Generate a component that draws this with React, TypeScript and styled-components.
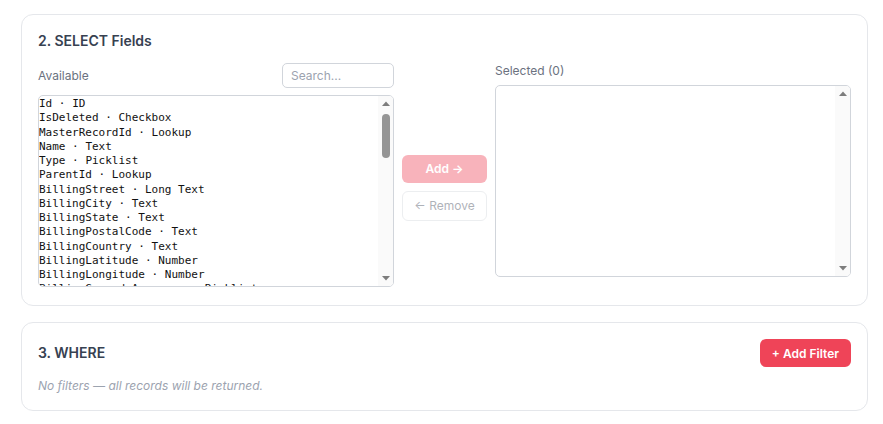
import styled, { createGlobalStyle } from "styled-components";

const GlobalStyle = createGlobalStyle`
  body {
    margin: 0;
    background: #ffffff;
    font-family: Inter, "Noto Sans", sans-serif;
  }
`;

const Page = styled.div`
  display: flex;
  flex-direction: column;
  gap: 16px;
  padding: 14px 15px 0 21px;
`;

const Card = styled.section<{ $bottom?: number }>`
  border: 1px solid #e5e7eb;
  border-radius: 12px;
  padding: 16px 16px ${(p) => p.$bottom ?? 16}px;
  background: #fff;
`;

const Title = styled.h2`
  margin: 0;
  font-size: 14px;
  line-height: 20px;
  font-weight: 600;
  color: #374151;
`;

const FieldsGrid = styled.div`
  display: grid;
  grid-template-columns: 1fr 85px 1fr;
  gap: 8px;
  margin-top: 12px;
`;

const Column = styled.div`
  display: flex;
  flex-direction: column;
  gap: 7px;
`;

const ColumnHead = styled.div<{ $tall?: boolean }>`
  display: flex;
  align-items: center;
  justify-content: space-between;
  height: ${(p) => (p.$tall ? "25px" : "15px")};
`;

const Label = styled.span`
  font-size: 12px;
  color: #6b7280;
`;

const SearchInput = styled.input`
  box-sizing: border-box;
  width: 112px;
  height: 25px;
  padding: 0 8px;
  border: 1px solid #d1d5db;
  border-radius: 5px;
  font-family: Inter, sans-serif;
  font-size: 12px;
  color: #374151;
  outline: none;
  &::placeholder {
    color: #9ca3af;
  }
`;

const ListFrame = styled.div`
  box-sizing: border-box;
  display: flex;
  height: 192px;
  border: 1px solid #d1d5db;
  border-radius: 5px;
  overflow: hidden;
  background: #fff;
`;

const Options = styled.div`
  flex: 1;
  overflow: hidden;
  padding-top: 1px;
  font-family: "DejaVu Sans Mono", monospace;
  font-size: 11px;
  color: #111;
`;

const OptionRow = styled.div`
  line-height: 14.25px;
  white-space: nowrap;
`;

const ScrollRail = styled.div`
  display: flex;
  flex-direction: column;
  width: 15px;
  background: #fafafa;
`;

const RailArrow = styled.div`
  display: flex;
  align-items: center;
  justify-content: center;
  height: 15px;
  flex: none;
`;

const RailTrack = styled.div`
  flex: 1;
  padding: 3px 3.5px 0;
`;

const Thumb = styled.div`
  height: 44px;
  border-radius: 4px;
  background: #959595;
`;

const Actions = styled.div`
  display: flex;
  flex-direction: column;
  justify-content: center;
  gap: 8px;
  padding-top: 25px;
`;

const ActionButton = styled.button<{ $primary?: boolean }>`
  box-sizing: border-box;
  height: ${(p) => (p.$primary ? "28px" : "30px")};
  border-radius: 6px;
  font-family: Inter, sans-serif;
  font-size: 12px;
  font-weight: ${(p) => (p.$primary ? 600 : 400)};
  color: ${(p) => (p.$primary ? "#fff" : "#374151")};
  background: ${(p) => (p.$primary ? "#ef4458" : "#fff")};
  border: ${(p) => (p.$primary ? "none" : "1px solid #d1d5db")};
  opacity: 0.4;
  cursor: not-allowed;
`;

const HeaderRow = styled.div`
  display: flex;
  align-items: center;
  justify-content: space-between;
`;

const AddFilterButton = styled.button`
  height: 28px;
  padding: 0 12px;
  border: none;
  border-radius: 6px;
  background: #ef4458;
  color: #fff;
  font-family: Inter, sans-serif;
  font-size: 12px;
  font-weight: 600;
  cursor: pointer;
`;

const EmptyNote = styled.p`
  margin: 11px 0 0;
  font-size: 12px;
  line-height: 16px;
  font-style: italic;
  color: #9ca3af;
`;

const fields: [string, string][] = [
  ["Id", "ID"],
  ["IsDeleted", "Checkbox"],
  ["MasterRecordId", "Lookup"],
  ["Name", "Text"],
  ["Type", "Picklist"],
  ["ParentId", "Lookup"],
  ["BillingStreet", "Long Text"],
  ["BillingCity", "Text"],
  ["BillingState", "Text"],
  ["BillingPostalCode", "Text"],
  ["BillingCountry", "Text"],
  ["BillingLatitude", "Number"],
  ["BillingLongitude", "Number"],
  ["BillingGeocodeAccuracy", "Picklist"],
  ["BillingAddress", "Address"],
  ["ShippingStreet", "Long Text"],
];

const Arrow = ({ up }: { up?: boolean }) => (
  <RailArrow>
    <svg width="8" height="5" viewBox="0 0 8 5">
      <path d={up ? "M0 5 L4 0.5 L8 5 Z" : "M0 0 L4 4.5 L8 0 Z"} fill="#7d7d7d" />
    </svg>
  </RailArrow>
);

const ScrollBar = ({ thumb }: { thumb?: boolean }) => (
  <ScrollRail>
    <Arrow up />
    <RailTrack>{thumb && <Thumb />}</RailTrack>
    <Arrow />
  </ScrollRail>
);

export default function App() {
  return (
    <>
      <GlobalStyle />
      <Page>
        <Card $bottom={18}>
          <Title>2. SELECT Fields</Title>
          <FieldsGrid>
            <Column>
              <ColumnHead $tall>
                <Label>Available</Label>
                <SearchInput placeholder="Search..." />
              </ColumnHead>
              <ListFrame role="listbox" aria-multiselectable>
                <Options>
                  {fields.map(([name, type]) => (
                    <OptionRow key={name} role="option">
                      {name} · {type}
                    </OptionRow>
                  ))}
                </Options>
                <ScrollBar thumb />
              </ListFrame>
            </Column>
            <Actions>
              <ActionButton $primary disabled>
                Add →
              </ActionButton>
              <ActionButton disabled>← Remove</ActionButton>
            </Actions>
            <Column>
              <ColumnHead>
                <Label>Selected (0)</Label>
              </ColumnHead>
              <ListFrame role="listbox" aria-multiselectable>
                <Options />
                <ScrollBar />
              </ListFrame>
            </Column>
          </FieldsGrid>
        </Card>
        <Card>
          <HeaderRow>
            <Title>3. WHERE</Title>
            <AddFilterButton>+ Add Filter</AddFilterButton>
          </HeaderRow>
          <EmptyNote>No filters — all records will be returned.</EmptyNote>
        </Card>
      </Page>
    </>
  );
}
